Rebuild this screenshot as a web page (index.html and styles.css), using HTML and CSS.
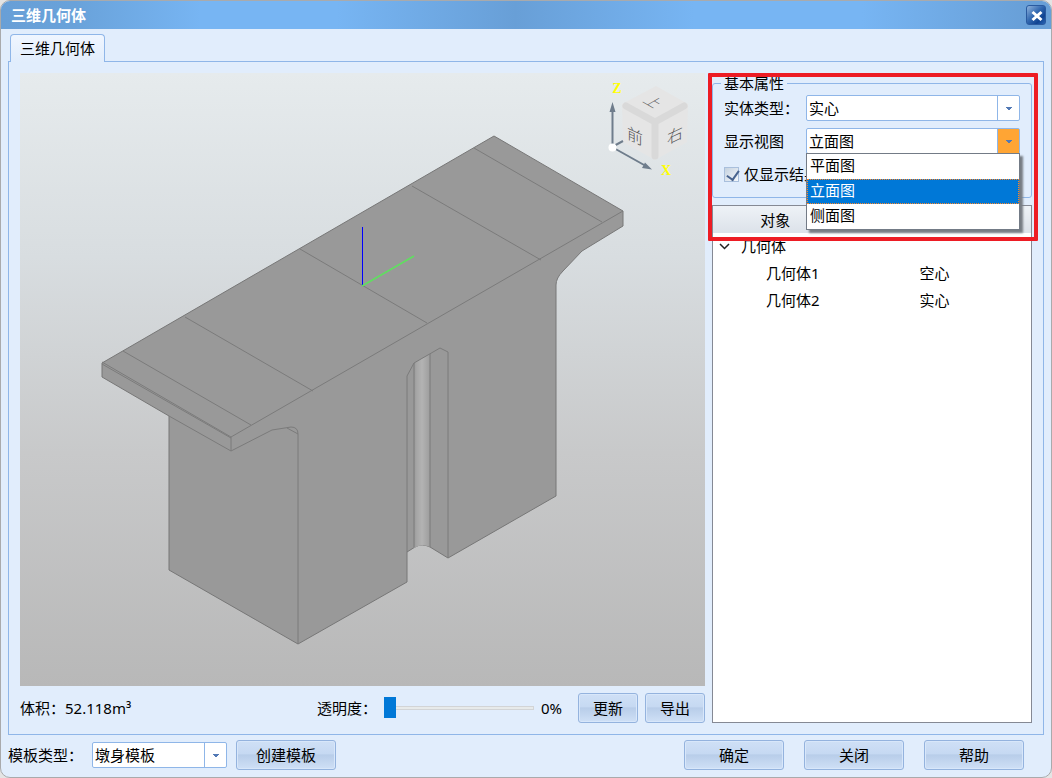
FILE: index.html
```html
<!DOCTYPE html>
<html lang="zh-CN">
<head>
<meta charset="utf-8">
<title>三维几何体</title>
<link rel="stylesheet" href="styles.css">
</head>
<body>
<div class="window">
  <header class="titlebar">
    <h1 class="title">三维几何体</h1>
    <button class="close" type="button" aria-label="关闭窗口">
      <svg viewBox="0 0 20 20" width="20" height="20"><path d="M5.500 6 14.500 14M14.500 6 5.500 14" fill="none" stroke="#fff" stroke-width="3"/></svg>
    </button>
  </header>
  <main class="content">
    <div class="tabs" role="tablist">
      <button class="tab" type="button" role="tab" aria-selected="true">三维几何体</button>
    </div>
    <section class="panel">
      <div class="left">
        <div class="viewport">
          <svg class="scene" viewBox="20 73 685 613" role="img" aria-label="三维视图">
            <defs>
              <linearGradient id="groove"><stop offset="0" stop-color="#999"/><stop offset=".15" stop-color="#a5a5a5"/><stop offset=".5" stop-color="#b3b3b3"/><stop offset="1" stop-color="#9d9d9d"/></linearGradient>
            </defs>
            <path d="M102 363 494 136 623 211V226L582 251 563 271Q556 278 556 285V496L448 558 430 547Q422 543 415 547L407 552V582L298 644 169 570V416L102 377Z" fill="#999" stroke="#777"/>
            <path d="M414 363 430 354V547Q422 543 414 548Z" fill="url(#groove)"/>
            <g fill="none" stroke="#7b7b7b">
              <path d="M102 362 231 437 623 211M102 364 231 438M231 437V451L169 416M123 351 251 425M185 317 313 391M300 249 427 323M412 186 541 260M474 148 602 222"/>
              <path d="M231 451 272 430 291 427Q298 427 298 434V644M287 428 298 434"/>
              <path d="M407 552V376L414 363 440 348 448 352V558M414 363V547M430 354V547"/>
            </g>
            <path d="M362.500 227V286" stroke="#00f"/>
            <path d="M362 286 414 256" stroke="#5fe05f" stroke-width="1.500"/>
            <g>
              <path d="M656 86 688 104 687 142 655 160 623 142 622 104Z" fill="#e5e5e5"/>
              <path d="M626 106 655 122 684 106M655 122V156" fill="none" stroke="#d9d9d9" stroke-width="7" stroke-linecap="round" stroke-linejoin="round"/>
              <g class="cube-text">
                <text class="top" transform="translate(653 102) rotate(30) skewX(-30)" x="-7" y="5">上</text>
                <text transform="translate(635 136) skewY(25)" x="-8" y="6">前</text>
                <text transform="translate(675 135) skewY(-25)" x="-8" y="6">右</text>
              </g>
              <path d="M612.500 147V108M612 147 645 165.500M612 147 623 141" stroke="#6f7d8c" stroke-width="2"/>
              <path d="M612.500 102 615.500 112H609.500ZM652 169.500 645 162.500 642 168Z" fill="#6f7d8c"/>
              <circle cx="612.500" cy="147.500" r="4" fill="#fff"/>
              <g class="axis-text"><text x="617" y="93">Z</text><text x="666" y="175">X</text></g>
            </g>
          </svg>
        </div>
        <div class="viewbar">
          <span class="volume">体积：52.118m³</span>
          <label for="alpha">透明度：</label>
          <input class="slider" id="alpha" type="range" min="0" max="100" value="0">
          <output class="percent" for="alpha">0%</output>
          <button class="btn small" type="button">更新</button>
          <button class="btn small" type="button">导出</button>
        </div>
      </div>
      <aside class="right">
        <fieldset class="group">
          <legend>基本属性</legend>
          <div class="row">
            <label for="kind">实体类型：</label>
            <div class="combo"><select id="kind"><option>实心</option><option>空心</option></select></div>
          </div>
          <div class="row">
            <label for="view">显示视图</label>
            <div class="combo open">
              <select id="view"><option>平面图</option><option selected>立面图</option><option>侧面图</option></select>
              <ul class="menu" role="listbox" aria-label="显示视图">
                <li role="option" aria-selected="false">平面图</li>
                <li class="active" role="option" aria-selected="true">立面图</li>
                <li role="option" aria-selected="false">侧面图</li>
              </ul>
            </div>
          </div>
          <div class="row">
            <label class="check"><input type="checkbox" checked>仅显示结果</label>
          </div>
        </fieldset>
        <div class="tree">
          <table>
            <colgroup><col class="col-name"><col></colgroup>
            <thead><tr><th>对象</th><th></th></tr></thead>
            <tbody>
              <tr><td class="parent"><button class="toggle" type="button" aria-label="折叠"><svg viewBox="0 0 11 11" width="11" height="11"><path d="M1 3 5.500 7.500 10 3" fill="none" stroke="#222" stroke-width="1.500"/></svg></button>几何体</td><td></td></tr>
              <tr><td class="child">几何体1</td><td class="value">空心</td></tr>
              <tr><td class="child">几何体2</td><td class="value">实心</td></tr>
            </tbody>
          </table>
        </div>
        <div class="highlight"></div>
      </aside>
    </section>
  </main>
  <footer class="footer">
    <label for="template">模板类型：</label>
    <div class="combo template"><select id="template"><option>墩身模板</option></select></div>
    <button class="btn" type="button">创建模板</button>
    <div class="actions">
      <button class="btn" type="button">确定</button>
      <button class="btn" type="button">关闭</button>
      <button class="btn" type="button">帮助</button>
    </div>
  </footer>
</div>
</body>
</html>
```
FILE: styles.css
```css
* { box-sizing: border-box; }
body {
  margin: 0;
  background: #e4e4e4;
  color: #000;
  font: 15px/20px "Noto Sans", "Noto Sans CJK SC", sans-serif;
}
button, select, input { font: inherit; color: inherit; }
.window {
  display: flex;
  flex-direction: column;
  min-height: 100vh;
  border: 1px solid #a9aaac;
  border-radius: 10px;
  background: #e1edfc;
  overflow: hidden;
}
.titlebar {
  display: flex;
  align-items: center;
  justify-content: space-between;
  height: 28px;
  padding: 0 5px 0 10px;
  background: linear-gradient(90deg, #689fd7 0, #69a2da 7%, #77b5f3 19%, #77b5f3 32%, #689fd7 49%, #77b5f3 66%, #77b5f3 82%, #689fd7 98%);
}
.title { margin: 0; color: #fff; font-size: 15px; line-height: 20px; font-weight: 700; }
.close {
  display: grid;
  place-items: center;
  width: 20px;
  height: 20px;
  padding: 0;
  border: 1px solid #2a5a9f;
  border-radius: 3px;
  background: linear-gradient(135deg, #8fb3dd, #3268b0 45%, #0f4391 75%, #2b65b5);
}
.content { display: flex; flex: 1; flex-direction: column; padding: 5px 7px 0; }
.tabs { display: flex; padding-left: 2px; }
.tab {
  position: relative;
  height: 28px;
  margin-bottom: -1px;
  padding: 0 9px 1px;
  border: 1px solid #8fb6e8;
  border-bottom: 0;
  border-radius: 4px 4px 0 0;
  background: linear-gradient(#f0f6ff, #e1edfc);
}
.panel { display: flex; flex: 1; gap: 7px; padding: 11px; border: 1px solid #8fb6e8; }
.left { display: flex; flex: 1; flex-direction: column; gap: 7px; min-width: 0; }
.viewport {
  display: flex;
  flex: 1;
  min-height: 0;
  background: linear-gradient(#e6ebed, #d8dde0 30%, #c8c9ca 62%, #b8b8b8);
}
.scene { display: block; flex: 1; width: 100%; }
.cube-text { font: 300 16px "Noto Sans CJK SC", sans-serif; fill: #555; }
.cube-text .top { font-size: 14px; }
.axis-text { font: 700 14px "Liberation Serif", serif; fill: #ff0; text-anchor: middle; }
.viewbar { display: flex; align-items: center; gap: 7px; }
.volume { margin-right: auto; }
.viewbar label { width: 60px; white-space: nowrap; }
.percent { width: 30px; }
.slider { appearance: none; width: 150px; height: 22px; margin: 0; background: none; }
.slider::-webkit-slider-runnable-track { height: 4px; border: 1px solid #d2d4d6; background: #e7eaea; }
.slider::-webkit-slider-thumb { appearance: none; width: 12px; height: 21px; margin-top: -10px; margin-left: -1px; background: #0078d7; }
.btn {
  width: 100px;
  height: 30px;
  padding: 0;
  border: 1px solid #94b3de;
  border-radius: 3px;
  background: linear-gradient(#cfe0f6, #c6d9f2 45%, #b8cde9 50%, #cfe0f6);
  box-shadow: inset 0 0 0 1px #d8e7fa;
}
.btn.small { width: 60px; }
.right { position: relative; display: flex; flex: 0 0 320px; flex-direction: column; gap: 7px; padding-top: 2px; }
.group {
  display: flex;
  flex-direction: column;
  gap: 7px;
  min-width: 0;
  margin: 0;
  padding: 4px 11px 10px;
  border: 1px solid #8fb6e8;
  border-radius: 3px;
}
.group legend { padding: 0 3px; margin-left: -3px; line-height: 16px; }
.row { display: flex; align-items: center; height: 26px; }
.row > label { flex: 0 0 82px; white-space: nowrap; }
.combo { position: relative; display: flex; flex: 1; height: 26px; border: 1px solid #8fb6e8; border-radius: 2px; background: #fff; }
.combo select { appearance: none; flex: 1; min-width: 0; padding: 0 22px 0 2px; border: 0; outline: 0; background: none; }
.combo::after {
  content: "";
  position: absolute;
  top: 0;
  right: 0;
  bottom: 0;
  width: 21px;
  border-left: 1px solid #8fb6e8;
  background:
    linear-gradient(#5279b5, #5279b5) 50% 11px / 6px 1px no-repeat,
    linear-gradient(#5279b5, #5279b5) 50% 12px / 4px 1px no-repeat,
    linear-gradient(#5279b5, #5279b5) 50% 13px / 2px 1px no-repeat;
  pointer-events: none;
}
.combo.open::after { background-color: #ffa534; }
.menu {
  position: absolute;
  z-index: 2;
  top: 24px;
  left: -1px;
  right: -1px;
  margin: 0;
  padding: 0;
  border: 1px solid #737b86;
  background: #fff;
  box-shadow: 3px 3px 2px #777d84;
  list-style: none;
}
.menu li { height: 25px; padding: 0 3px; line-height: 22px; }
.menu .active { outline: 1px dotted #ff8728; outline-offset: -1px; background: #0078d7; color: #fff; }
.row .check { display: flex; flex: 1; align-items: center; gap: 5px; }
.check input {
  appearance: none;
  width: 15px;
  height: 15px;
  margin: 0;
  border: 1px solid #a9bfdc;
  background: linear-gradient(135deg, #c5d2e0, #f5f8fb);
}
.check input:checked::after {
  content: "";
  display: block;
  width: 6px;
  height: 10px;
  margin: 0 0 0 4px;
  border: solid #49648f;
  border-width: 0 2px 2px 0;
  transform: rotate(35deg);
}
.tree { flex: 1; border: 1px solid #858994; background: #fff; }
.tree table { width: 100%; border-collapse: collapse; table-layout: fixed; }
.col-name { width: 125px; }
.tree th { height: 27px; padding: 0; background: linear-gradient(#eef2f7, #dce2e9); font-weight: 400; }
.tree th + th { border-left: 1px solid #d0d6de; }
.tree td { height: 27px; padding: 0 0 2px; }
.tree .parent { padding-left: 6px; }
.tree .child { padding-left: 53px; }
.tree .value { text-align: center; }
.toggle { display: inline-flex; width: 11px; height: 11px; margin-right: 11px; padding: 0; border: 0; background: none; }
.highlight { position: absolute; z-index: 3; top: 0; left: -4px; right: -6px; height: 168px; border: 4px solid #ed1c24; border-radius: 1px; pointer-events: none; }
.footer { display: flex; align-items: center; gap: 9px; padding: 5px 27px 7px 7px; }
.template { flex: 0 0 135px; }
.actions { display: flex; gap: 20px; margin-left: auto; }
```
